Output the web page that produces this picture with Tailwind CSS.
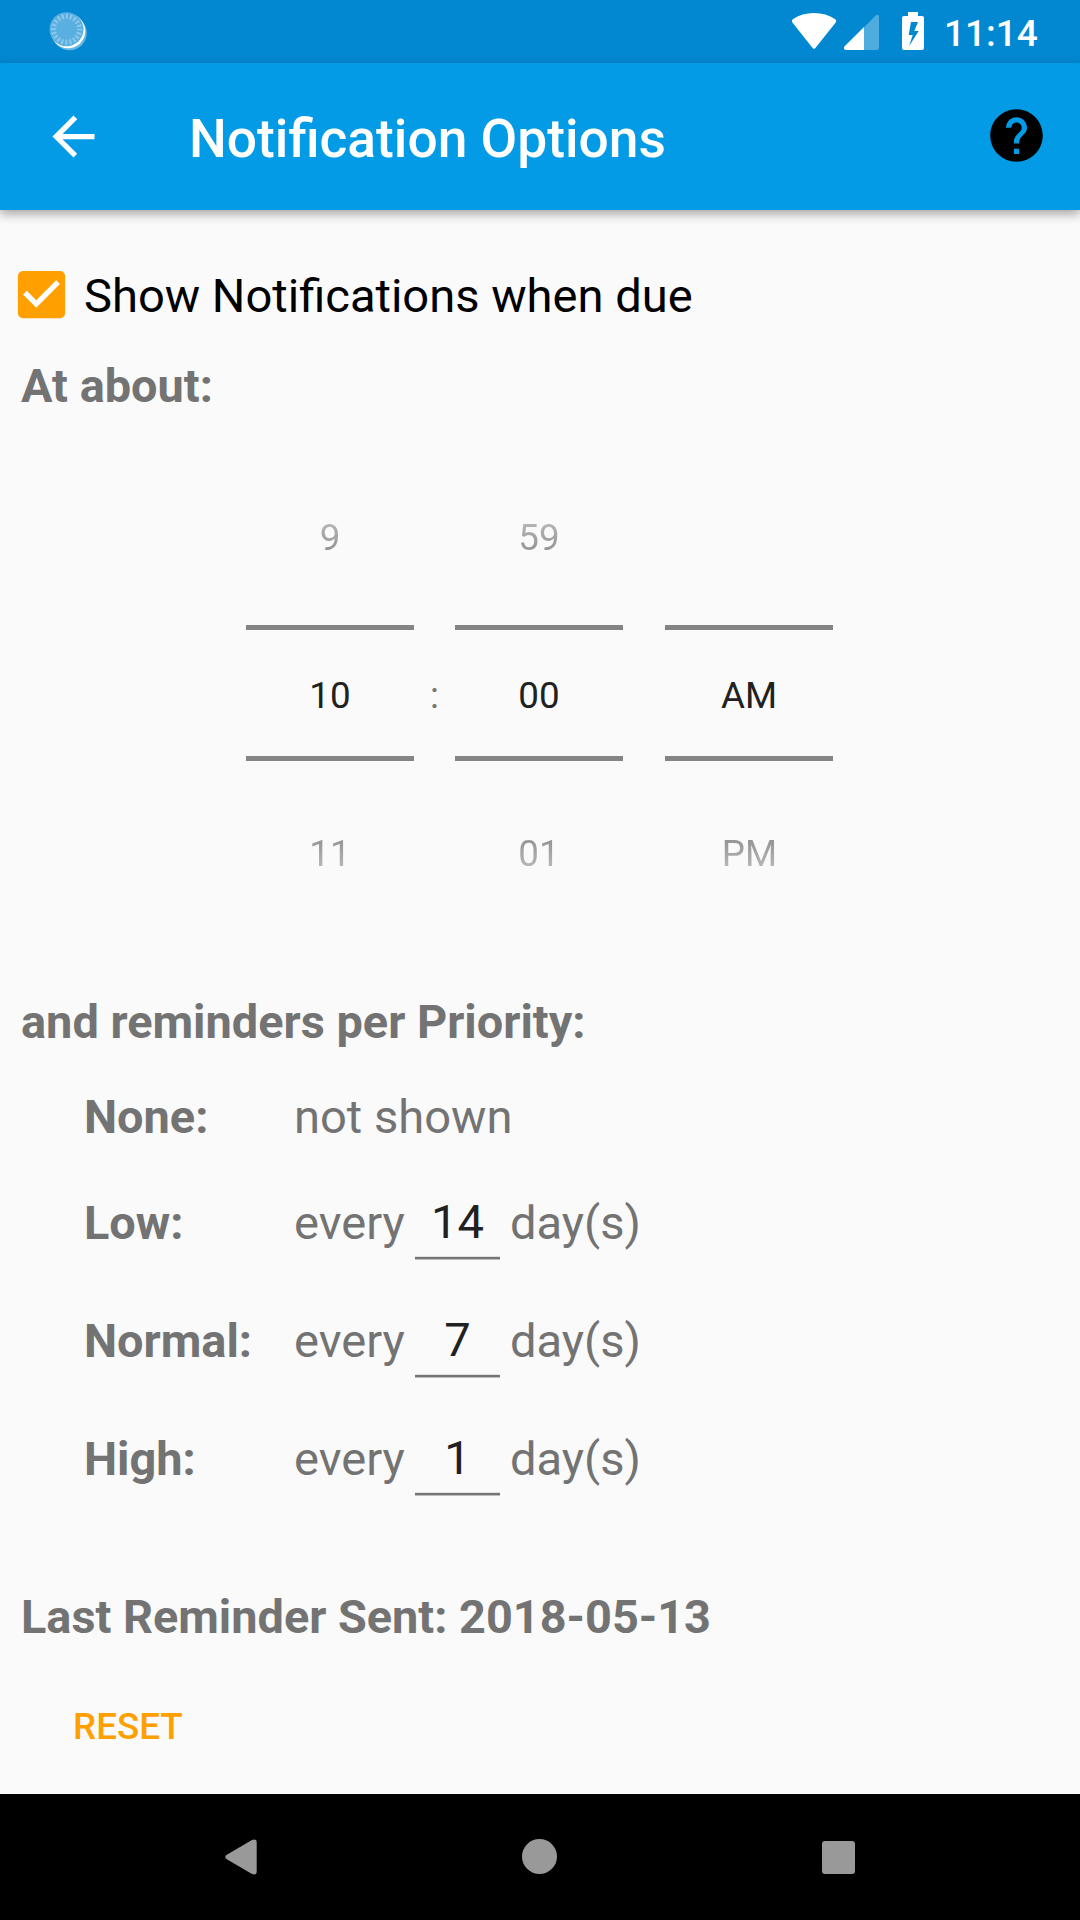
<!DOCTYPE html>
<html lang="en">
<head>
  <meta charset="UTF-8">
  <meta name="viewport" content="width=device-width, initial-scale=1.0">
  <title>Notification Options</title>
  <script src="https://cdn.jsdelivr.net/npm/@tailwindcss/browser@4"></script>
</head>
<body class="w-[1080px] h-[1920px] overflow-hidden bg-[#fafafa] font-['Roboto',sans-serif] text-[47.1px] text-[#737373] flex flex-col">

  <!-- Status Bar -->
  <div class="h-[63px] shrink-0 bg-[#0288d1] flex items-start justify-between pl-12 pr-[42px]">
    <svg class="w-10 h-[63px]" viewBox="48 0 40 63">
      <circle cx="69.5" cy="33" r="17.3" fill="#fff" fill-opacity=".4"/>
      <circle cx="68" cy="31" r="17.3" fill="#fff"/>
      <circle cx="66.5" cy="29.3" r="17" fill="#5aafe1"/>
      <circle cx="66.5" cy="29.3" r="13" fill="none" stroke="#8bc7ea" stroke-width="5" stroke-dasharray="2.1 1.984" stroke-dashoffset="1.05"/>
    </svg>
    <div class="flex items-start">
      <svg class="w-[152px] h-[63px]" viewBox="791 0 152 63">
        <!-- wifi -->
        <path fill="#fff" d="M792.4 22.5Q791 20.8 792.8 19.3C799 15 806 13 814 13s15 2 21.3 6.3q1.8 1.5.4 3.2L815.8 47.5q-1.8 2.6-3.6 0z"/>
        <!-- signal -->
        <path fill="#fff" fill-opacity=".3" d="M864 27.3 875.4 15.7q3.6-2.4 3.6 1.3V48q0 2-2 2H864z"/>
        <path fill="#fff" d="M864 27V50H846q-3.4-.7-1.3-3.7z"/>
        <!-- battery -->
        <path fill="#fff" fill-rule="evenodd" d="M908 12h10v4h4q2 0 2 2v30q0 2-2 2H904q-2 0-2-2V18q0-2 2-2h4zM911 22 908.7 35h4L909 46.3 918.7 31h-4.4L918 22z"/>
      </svg>
      <span class="w-[95px] pl-px pt-[6px] leading-[55px] text-[37px] font-medium text-white">11:14</span>
    </div>
  </div>

  <!-- App Bar -->
  <header class="relative h-[147px] shrink-0 bg-[#039be5] shadow-[0_4px_10px_rgba(0,0,0,0.35)] flex items-center pl-[42px] pr-8">
    <svg class="w-[63px] h-[63px]" viewBox="0 0 24 24">
      <path fill="#fff" d="M20 11H7.83l5.59-5.59L12 4l-8 8 8 8 1.41-1.41L7.83 13H20v-2z"/>
    </svg>
    <h1 class="ml-[84px] pt-[5px] leading-[80px] text-[53.3px] font-medium text-white">Notification Options</h1>
    <svg class="ml-auto mb-[2px] w-[63px] h-[63px]" viewBox="0 0 24 24">
      <path d="M12 2C6.48 2 2 6.48 2 12s4.48 10 10 10 10-4.48 10-10S17.52 2 12 2zm1 17h-2v-2h2v2zm2.07-7.75l-.9.92C13.45 12.9 13 13.5 13 15h-2v-.5c0-1.1.45-2.1 1.17-2.83l1.24-1.26c.37-.36.59-.86.59-1.41 0-1.1-.9-2-2-2s-2 .9-2 2H8c0-2.21 1.79-4 4-4s4 1.79 4 4c0 .88-.36 1.68-.93 2.25z"/>
    </svg>
  </header>

  <!-- Content -->
  <main class="flex-1 pt-11">
    <div class="h-[84px] flex items-center pl-[10px] text-black">
      <svg class="w-[63px] h-[63px] mb-1" viewBox="0 0 24 24">
        <path fill="#ffa000" d="M19 3H5c-1.11 0-2 .9-2 2v14c0 1.1.89 2 2 2h14c1.11 0 2-.9 2-2V5c0-1.1-.89-2-2-2z"/>
        <path fill="#fff" d="M10 17l-5-5 1.41-1.41L10 14.17l7.59-7.59L19 8l-9 9z"/>
      </svg>
      <span class="ml-[11px]">Show Notifications when due</span>
    </div>
    <h2 class="mt-5 h-14 leading-14 pl-[21px] text-[46.9px] font-bold">At about:</h2>

    <!-- Time Picker -->
    <div class="mt-[51px] h-[461px] pl-[246px] flex text-[36.75px] text-center">
      <div class="w-[168px]">
        <div class="h-[145px] leading-[145px] mb-[15px] text-transparent bg-clip-text bg-linear-to-b from-[#b6b6b6] from-40% to-[#949494] to-59%">9</div>
        <div class="h-[136px] border-y-5 border-[#848484] leading-[131px] text-[#212121]">10</div>
        <div class="h-[145px] leading-[145px] mt-5 text-transparent bg-clip-text bg-linear-to-b from-[#949494] from-40% to-[#b6b6b6] to-59%">11</div>
      </div>
      <div class="w-[41px] pt-[165px] leading-[131px]">:</div>
      <div class="w-[168px]">
        <div class="h-[145px] leading-[145px] mb-[15px] text-transparent bg-clip-text bg-linear-to-b from-[#b6b6b6] from-40% to-[#949494] to-59%">59</div>
        <div class="h-[136px] border-y-5 border-[#848484] leading-[131px] text-[#212121]">00</div>
        <div class="h-[145px] leading-[145px] mt-5 text-transparent bg-clip-text bg-linear-to-b from-[#949494] from-40% to-[#b6b6b6] to-59%">01</div>
      </div>
      <div class="w-[168px] ml-[42px]">
        <div class="h-[145px] mb-[15px]"></div>
        <div class="h-[136px] border-y-5 border-[#848484] leading-[131px] text-[#212121]">AM</div>
        <div class="h-[145px] leading-[145px] mt-5 pl-px text-transparent bg-clip-text bg-linear-to-b from-[#949494] from-40% to-[#b6b6b6] to-59%">PM</div>
      </div>
    </div>

    <!-- Reminders -->
    <h2 class="mt-[68px] h-14 leading-14 pl-[21px] text-[46.9px] font-bold">and reminders per Priority:</h2>
    <div class="mt-[39px] mb-[19px] pl-[84px] h-14 leading-14 flex">
      <span class="w-[210px] text-[46.9px] font-bold">None:</span>
      <span>not shown</span>
    </div>
    <div class="pl-[84px] h-[118px] leading-[118px] flex">
      <span class="w-[210px] text-[46.9px] font-bold">Low:</span>
      <span class="w-[121px]">every</span>
      <span class="w-[85px] mt-[23px] h-[72px] leading-[70px] border-b-2 border-[#757575] shadow-[0_1px_#bdbdbd,inset_0_-1px_#e0e0e0] text-center text-[#212121]">14</span>
      <span class="ml-[10px]">day(s)</span>
    </div>
    <div class="pl-[84px] h-[118px] leading-[118px] flex">
      <span class="w-[210px] text-[46.9px] font-bold">Normal:</span>
      <span class="w-[121px]">every</span>
      <span class="w-[85px] mt-[23px] h-[72px] leading-[70px] border-b-2 border-[#757575] shadow-[0_1px_#bdbdbd,inset_0_-1px_#e0e0e0] text-center text-[#212121]">7</span>
      <span class="ml-[10px]">day(s)</span>
    </div>
    <div class="pl-[84px] h-[118px] leading-[118px] flex">
      <span class="w-[210px] text-[46.9px] font-bold">High:</span>
      <span class="w-[121px]">every</span>
      <span class="w-[85px] mt-[23px] h-[72px] leading-[70px] border-b-2 border-[#757575] shadow-[0_1px_#bdbdbd,inset_0_-1px_#e0e0e0] text-center text-[#212121]">1</span>
      <span class="ml-[10px]">day(s)</span>
    </div>

    <h2 class="mt-[71px] h-14 leading-14 pl-[21px] text-[46.85px] font-bold">Last Reminder Sent: 2018-05-13</h2>
    <button class="block mt-[54px] ml-[73px] h-[55px] leading-[55px] text-[36.75px] font-medium text-[#ffa000]">RESET</button>
  </main>

  <!-- Navigation Bar -->
  <nav class="h-[126px] shrink-0 bg-black flex items-center pl-[225px]">
    <svg class="w-8 h-9" viewBox="0 0 32 36">
      <path fill="#999" d="M1.8 15.8 27 1q4.7-1.5 4.7 2.5V32.5q0 4-4.7 2.5L1.8 20.2q-3.2-2.2 0-4.4z"/>
    </svg>
    <div class="ml-[265px] mb-px w-[35px] h-[35px] rounded-full bg-[#999]"></div>
    <div class="ml-[265px] w-[33px] h-[33px] rounded-[3px] bg-[#999]"></div>
  </nav>

</body>
</html>
